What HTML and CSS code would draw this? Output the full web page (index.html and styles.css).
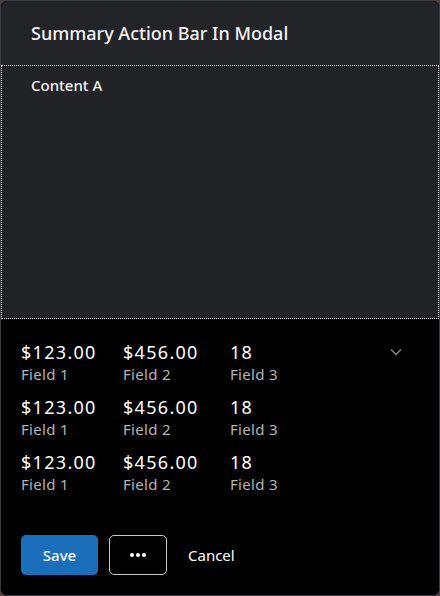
FILE: index.html
```html
<!DOCTYPE html>
<html>
<head>
<meta charset="utf-8">
<link rel="stylesheet" href="styles.css">
</head>
<body>
<div class="modal">
  <header class="modal-header">
    <h1 class="title">Summary Action Bar In Modal</h1>
  </header>
  <section class="modal-content">
    <div class="content-label">Content A</div>
  </section>
  <footer class="modal-footer">
    <div class="summary">
      <div class="summary-row">
        <div class="field"><div class="value">$123.00</div><div class="label">Field 1</div></div>
        <div class="field"><div class="value">$456.00</div><div class="label">Field 2</div></div>
        <div class="field"><div class="value">18</div><div class="label">Field 3</div></div>
        <svg class="chevron" width="12" height="8" viewBox="0 0 12 8"><path d="M1 1.5 L6 6.5 L11 1.5" fill="none" stroke="#8a8a8a" stroke-width="1.3"/></svg>
      </div>
      <div class="summary-row">
        <div class="field"><div class="value">$123.00</div><div class="label">Field 1</div></div>
        <div class="field"><div class="value">$456.00</div><div class="label">Field 2</div></div>
        <div class="field"><div class="value">18</div><div class="label">Field 3</div></div>
      </div>
      <div class="summary-row">
        <div class="field"><div class="value">$123.00</div><div class="label">Field 1</div></div>
        <div class="field"><div class="value">$456.00</div><div class="label">Field 2</div></div>
        <div class="field"><div class="value">18</div><div class="label">Field 3</div></div>
      </div>
    </div>
    <div class="actions">
      <button class="btn btn-primary">Save</button>
      <button class="btn btn-outline" aria-label="More"><span class="dot"></span><span class="dot"></span><span class="dot"></span></button>
      <button class="btn btn-text">Cancel</button>
    </div>
  </footer>
</div>
</body>
</html>
```
FILE: styles.css
```css
html, body {
  margin: 0;
  padding: 0;
  background: #4d403c;
}
body {
  font-family: "Noto Sans", "Open Sans", sans-serif;
  color: #f4f4f4;
}
.modal {
  box-sizing: border-box;
  width: 440px;
  height: 596px;
  border: 1px solid #3a3b3f;
  border-radius: 7px;
  overflow: hidden;
  display: flex;
  flex-direction: column;
  background: #000;
}
.modal-header {
  background: #232428;
  height: 64px;
  padding: 0 30px;
  display: flex;
  align-items: center;
  flex: none;
}
.title {
  margin: 0;
  font-size: 18px;
  font-weight: 500;
  line-height: 24px;
  color: #f2f2f2;
}
.modal-content {
  background: #222327;
  height: 254px;
  flex: none;
  outline: 1px dotted #ffffff;
  outline-offset: -1px;
  padding: 10px 30px;
  box-sizing: border-box;
}
.content-label {
  font-size: 15px;
  font-weight: 500;
  line-height: 20px;
}
.modal-footer {
  flex: 1;
  background: #000;
  padding: 21px 20px 0 20px;
  display: flex;
  flex-direction: column;
}
.summary {
  display: flex;
  flex-direction: column;
  gap: 11px;
}
.summary-row {
  display: grid;
  grid-template-columns: 102px 107px 1fr auto;
  align-items: start;
}
.value {
  font-size: 18px;
  line-height: 24px;
  letter-spacing: 1.3px;
  color: #ffffff;
}
.label {
  font-size: 15px;
  line-height: 20px;
  letter-spacing: 0.3px;
  color: #b4b4b4;
}
.chevron {
  margin-top: 8px;
  margin-right: 17px;
}
.actions {
  margin-top: 41px;
  display: flex;
  align-items: center;
  gap: 11px;
}
.btn {
  font-family: inherit;
  height: 40px;
  box-sizing: border-box;
  border-radius: 5px;
  font-size: 15px;
  cursor: pointer;
}
.btn-primary {
  width: 77px;
  background: #1b6fba;
  border: none;
  color: #fff;
  font-weight: 500;
}
.btn-outline {
  width: 58px;
  background: transparent;
  border: 1px solid #c8c8c8;
  display: flex;
  align-items: center;
  justify-content: center;
  gap: 2px;
}
.dot {
  width: 4px;
  height: 4px;
  border-radius: 2px;
  background: #fff;
}
.btn-text {
  background: transparent;
  border: none;
  color: #fff;
  padding: 0 10px;
  font-weight: 400;
}
```
